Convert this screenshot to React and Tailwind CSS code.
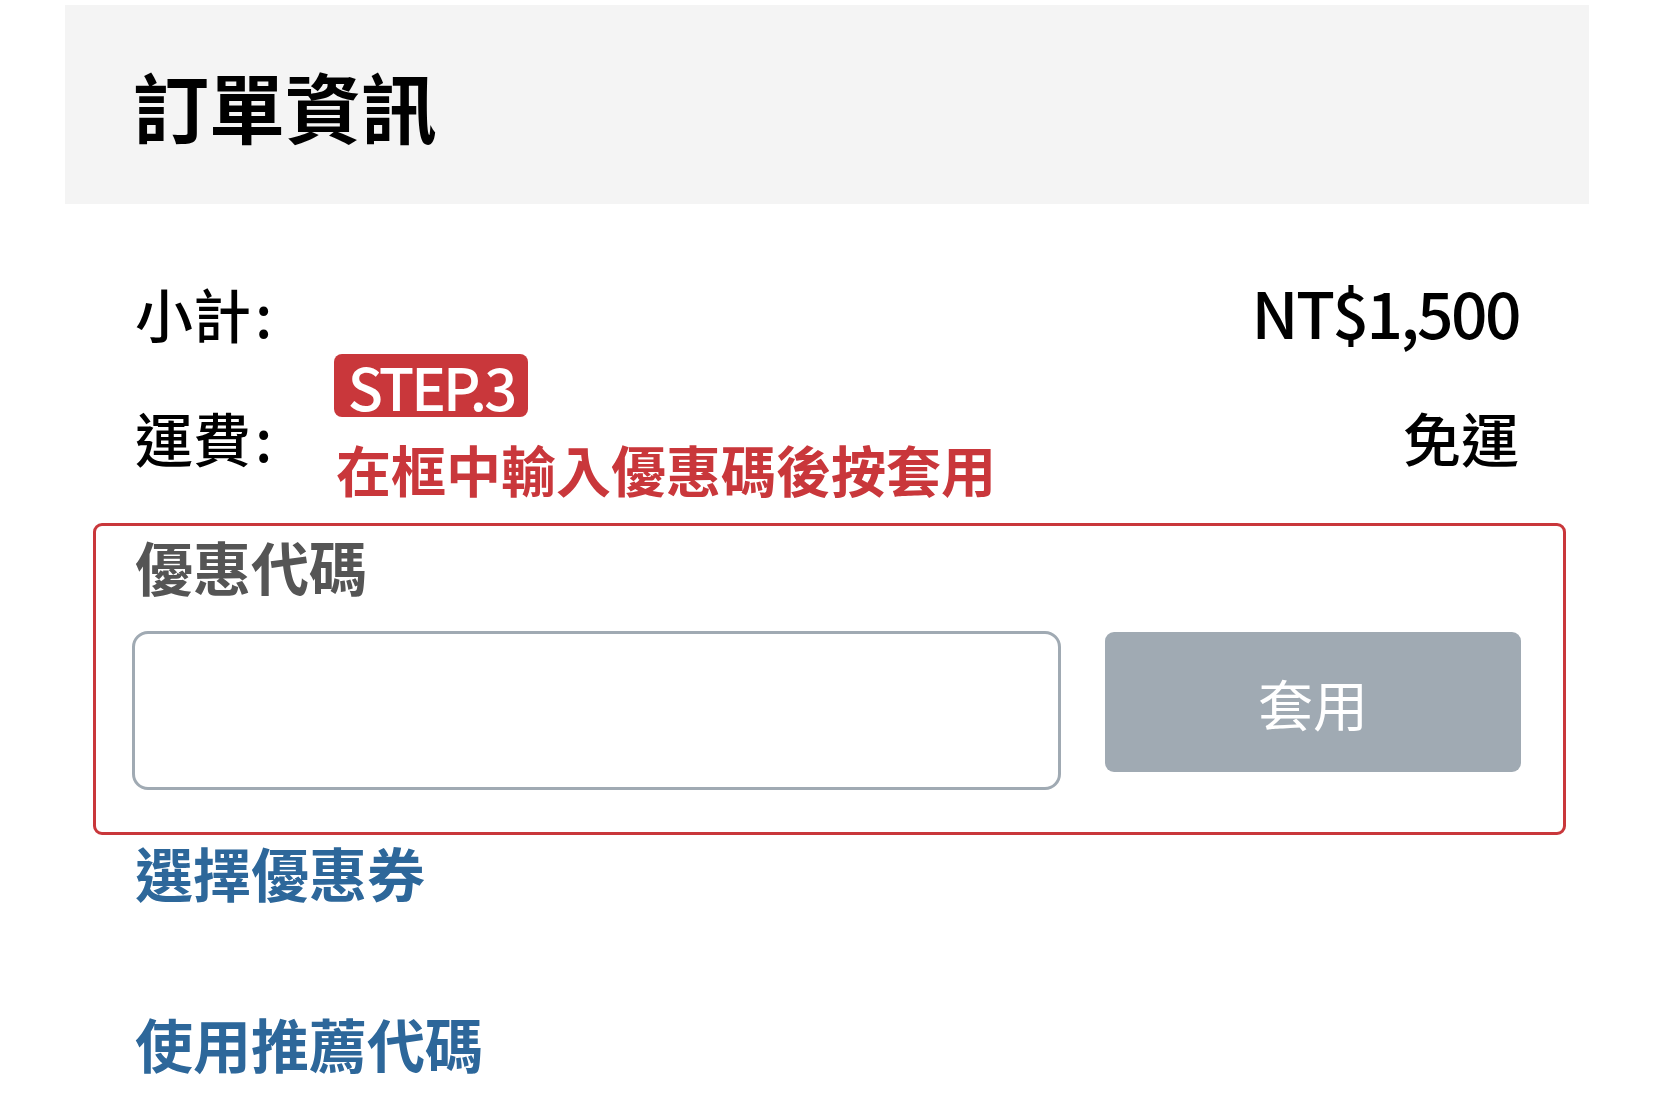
const cjk = { fontFamily: '"Noto Sans CJK TC", "Noto Sans", sans-serif' }

function SummaryRow({ label, value, valueClass = '' }) {
  return (
    <div className="h-[124px] flex items-center justify-between text-[58px] font-medium text-black leading-none">
      <span>
        {label}
        <span className="ml-[4px]">:</span>
      </span>
      <span className={valueClass}>{value}</span>
    </div>
  )
}

export default function App() {
  return (
    <div className="relative min-h-[1119px] bg-white pt-[5px]" style={cjk}>
      <div className="mx-[65px]">
        <div className="h-[199px] bg-[#f4f4f4] flex items-center px-[68px]">
          <h2 className="text-[76px] font-bold leading-none text-black">訂單資訊</h2>
        </div>

        <div className="px-[70px]">
          <div className="mt-[47px]">
            <SummaryRow label="小計" value="NT$1,500" valueClass="text-[64px] tracking-[-2.5px] -mt-[4px]" />
            <SummaryRow label="運費" value="免運" />
          </div>

          <div className="mt-[24px] -ml-[42px] -mr-[47px] border-[3px] border-[#c9373b] rounded-[9px] pl-[36px] pr-[42px] pb-[42px]">
            <div className="h-[80px] flex items-center text-[58px] font-bold text-[#555] leading-none pl-[3px]">優惠代碼</div>
            <div className="mt-[25px] flex items-start gap-[44px]">
              <input
                className="flex-1 h-[159px] border-[3px] border-[#a0aab3] rounded-[16px] bg-white outline-none px-4 text-[50px]"
                style={cjk}
              />
              <button className="w-[416px] h-[140px] mt-[1px] bg-[#a0aab3] rounded-[9px] text-white text-[55px] leading-none" style={cjk}>
                套用
              </button>
            </div>
          </div>

          <div className="h-[73px] flex items-center text-[58px] font-bold text-[#2d679a] leading-none">選擇優惠券</div>
          <div className="mt-[92px] h-[86px] flex items-center text-[58px] font-bold text-[#2d679a] leading-none">使用推薦代碼</div>
        </div>
      </div>

      {/* annotation overlay */}
      <div className="absolute left-[334px] top-[354px] w-[194px] h-[63px] bg-[#c9373b] rounded-[8px] flex items-center justify-center">
        <span className="text-white text-[58px] font-medium leading-none tracking-[-3px]">STEP.3</span>
      </div>
      <div className="absolute left-[336px] top-[441px] text-[55px] font-bold leading-none text-[#c9373b] whitespace-nowrap">
        在框中輸入優惠碼後按套用
      </div>
    </div>
  )
}
